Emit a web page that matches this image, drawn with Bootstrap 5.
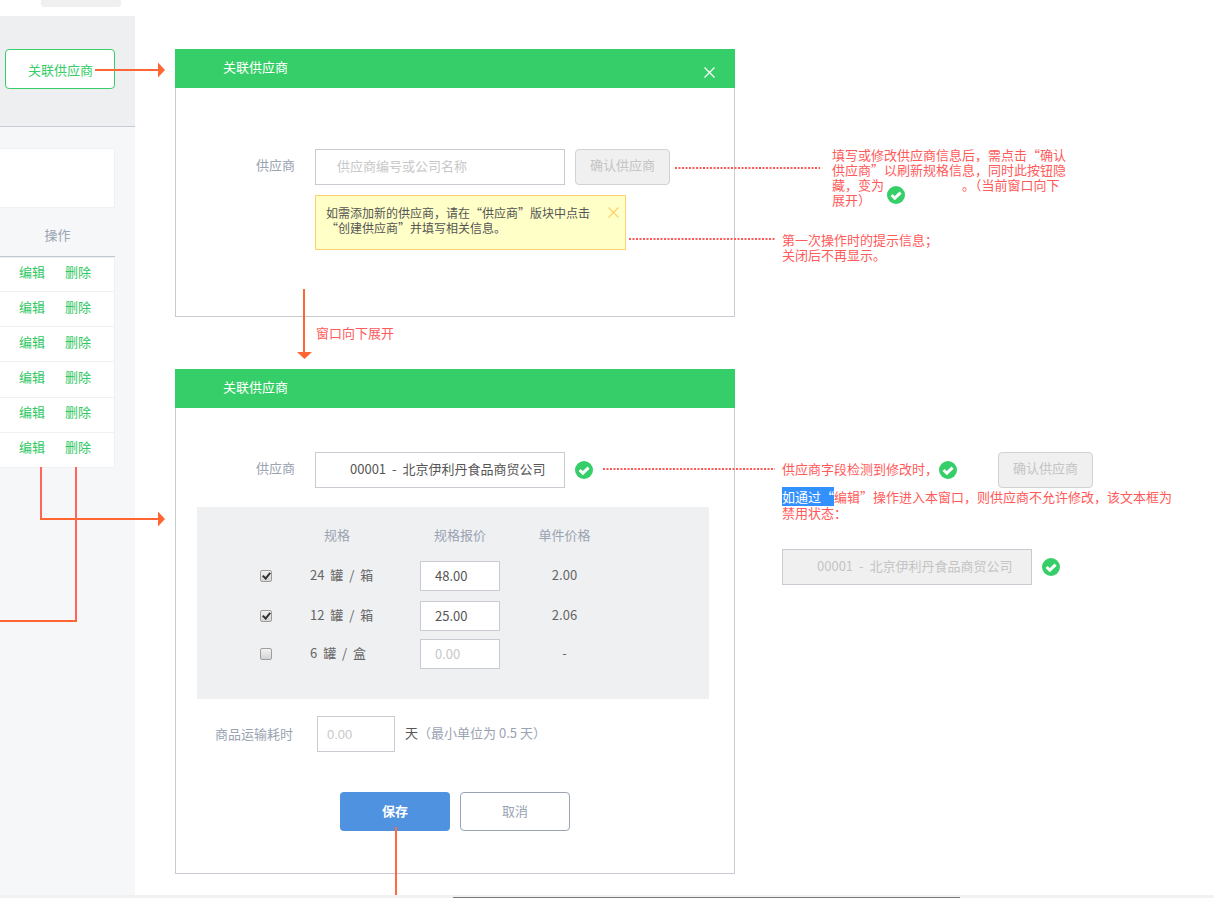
<!DOCTYPE html>
<html lang="zh-CN">
<head>
    <meta charset="utf-8">
    <title>关联供应商</title>
    <link href="https://cdn.jsdelivr.net/npm/bootstrap@5.3.0/dist/css/bootstrap.min.css" rel="stylesheet">
    <style>
        html, body { height: 100%; }
        body { margin: 0; background: #fff; overflow: hidden; color: #555; font: 13px/15px "Noto Sans CJK SC", "Liberation Sans", sans-serif; }
        .canvas { position: relative; width: 1214px; height: 898px; overflow: hidden; }

        /* left page fragment */
        .side { position: absolute; left: 0; top: 0; width: 135px; height: 895px; background: #f6f7f9; }
        .side-top { height: 16px; background: #fff; }
        .side-stub { width: 80px; height: 7px; margin-left: 41px; background: #f0f0f0; border-radius: 0 0 3px 3px; }
        .side-band { height: 111px; padding: 33px 0 0 5px; background: #eeeff1; border-bottom: 1px solid #c5cad3; }
        .link-btn { display: block; width: 110px; height: 40px; padding: 0 0 0 22px; font-size: 13px; line-height: 35px; text-align: left; color: #36ce68; background: #fff; border: 1px solid #36ce68; border-radius: 4px; }
        .side-box { width: 115px; height: 60px; margin-top: 21px; background: #fff; border: 1px solid #eef0f3; border-left: 0; }
        .side-head { width: 115px; height: 48px; line-height: 54px; text-align: center; color: #9aa3b2; }
        .op-list { width: 115px; border-radius: 0; border-top: 1px solid #c1c7d1; }
        .op-row { height: 35.17px; padding: 0 23px 6px 0; gap: 20px; color: #2fc862; background: #fff; border-color: #eef0f3; border-left: 0; border-radius: 0 !important; }

        /* dialog windows */
        .win { position: absolute; left: 175px; width: 560px; border-radius: 0; border: 1px solid #c8cbd2; }
        .win-a { top: 49px; height: 268px; }
        .win-b { top: 369px; height: 505px; }
        .win-head { height: 39px; margin: -1px -1px 0; padding: 0 0 4px 48px; color: #fff; font-size: 13px; background: #36ce68; border: 0; border-radius: 0 !important; }
        .win-close { width: 11px; height: 11px; margin: 11px 20px 0 0; }
        .win-body { padding: 0; }
        .win-a .win-body { padding-top: 61px; }
        .win-b .win-body { padding-top: 44px; }
        .field-label { width: 119px; margin-right: 20px; padding-bottom: 6px; text-align: right; color: #9aa3b2; }
        .text-box { width: 250px; height: 36px; padding: 0 0 4px 21px; font-size: 13px; color: #555; background: #fff; border: 1px solid #c8cbd2; border-radius: 0; }
        .text-box::placeholder { color: #c8c8c8; opacity: 1; }
        .text-box.filled { padding-left: 34px; word-spacing: 3px; }
        .text-box:disabled { background: #f0f0f0; color: #c4c4c4; opacity: 1; }
        .confirm-btn { width: 95px; height: 36px; padding: 0 0 4px; font-size: 13px; color: #c4c4c4; background: #f0f0f0; border: 1px solid #d2d2d2; border-radius: 4px; }
        .tip-box { position: relative; width: 311px; height: 55px; margin: 10px 0 0 139px; padding: 9px 10px 0 10px; font-size: 12px; line-height: 15px; color: #555; background: #ffffc8; border: 1px solid #fbd26b; border-radius: 0; }
        .tip-close { position: absolute; right: 6px; top: 11px; width: 11px; height: 11px; }
        .ok-icon { flex: none; width: 18px; height: 18px; display: block; }
        .ms-10 { margin-left: 10px; }

        .spec-panel { width: 512px; height: 192px; margin: 19px 0 0 21px; padding: 18px 0 0 63px; background: #eff0f2; }
        .spec-row { display: flex; align-items: center; height: 30px; }
        .spec-row.row-wide { margin-bottom: 10px; }
        .spec-row.row-tight { margin-bottom: 8px; }
        .spec-cols { height: 20px; margin-bottom: 16px; padding-bottom: 2px; color: #9aa3b2; }
        .cell-check { width: 50px; flex: none; line-height: 0; }
        .cell-name { width: 110px; flex: none; padding-bottom: 4px; font-size: 13px; word-spacing: 3px; color: #666; }
        .spec-cols .cell-name { padding: 0 0 0 14px; color: #9aa3b2; }
        .cell-input { width: 80px; flex: none; text-align: center; }
        .cell-price { width: 129px; flex: none; padding-bottom: 4px; text-align: center; font-size: 13px; color: #666; }
        .spec-cols .cell-price { padding-bottom: 0; color: #9aa3b2; }
        .price-box { width: 80px; height: 30px; padding: 0 0 2px 14px; font-size: 13px; color: #555; background: #fff; border: 1px solid #c8cbd2; border-radius: 0; }
        .price-box::placeholder { color: #c8c8c8; opacity: 1; }
        .spec-check { appearance: none; position: relative; display: inline-block; width: 12px; height: 12px; margin: 0; vertical-align: top; background: linear-gradient(#f2f2f2, #d4d4d4); border: 1px solid #9d9d9d; border-radius: 2px; }
        .spec-check:checked::before { content: ""; position: absolute; left: 3px; top: 0; width: 5px; height: 8px; border: solid #333; border-width: 0 2px 2px 0; transform: rotate(40deg); }

        .ship-label { width: 117px; margin-right: 24px; padding-bottom: 2px; text-align: right; color: #9aa3b2; }
        .ship-row { margin-top: 17px; }
        .ship-box { width: 78px; height: 36px; padding: 0 0 0 9px; font: 13px "Liberation Sans", sans-serif; background: #fff; border: 1px solid #c8cbd2; border-radius: 0; }
        .ship-box::placeholder { color: #c8c8c8; opacity: 1; }
        .ship-unit { margin-left: 10px; padding-bottom: 4px; font-size: 13px; color: #555; }
        .ship-hint { padding-bottom: 4px; font-size: 13px; color: #9aa3b2; }
        .act-row { margin: 40px 0 0 164px; gap: 10px; }
        .save-btn { width: 110px; height: 39px; padding: 0 0 2px; font-size: 13px; font-weight: 700; color: #fff; background: #4f92e0; border: 0; border-radius: 4px; }
        .cancel-btn { width: 110px; height: 39px; padding: 0 0 2px; font-size: 13px; color: #9aa3b2; background: #fff; border: 1px solid #9aa3b2; border-radius: 4px; }

        /* annotations */
        .note { position: absolute; font-size: 13px; line-height: 15px; color: #ff5a5a; }
        .note-a { left: 832px; top: 147px; width: 236px; }
        .note-b { left: 782px; top: 232px; }
        .note-c { left: 316px; top: 325px; }
        .note-d { left: 782px; top: 461px; }
        .note-e { left: 782px; top: 489px; width: 392px; line-height: 16px; }
        .note-e mark { padding: 0; color: #fff; background: #3390ff; }
        .gap-icon { display: inline-block; width: 78px; }
        .free { position: absolute; }
        .arrows { position: absolute; left: 0; top: 0; pointer-events: none; }
        .scroll-track { position: absolute; left: 0; bottom: 0; width: 1214px; height: 3px; background: #f1f1f1; }
        .scroll-thumb { width: 507px; height: 1px; margin: 2px 0 0 453px; background: #777; }
    </style>
</head>
<body>
<svg width="0" height="0" class="position-absolute">
    <symbol id="ok" viewBox="0 0 18 18">
        <circle cx="9" cy="9" r="9" fill="#36ce68"/>
        <path d="M4.6 9 7.8 12.2 13.6 6.6" fill="none" stroke="#fff" stroke-width="3"/>
    </symbol>
</svg>

<div class="canvas">
    <div class="side">
        <div class="side-top"><div class="side-stub"></div></div>
        <div class="side-band">
            <button class="btn link-btn" type="button">关联供应商</button>
        </div>
        <div class="side-box"></div>
        <div class="side-head">操作</div>
        <div class="list-group op-list">
            <div class="list-group-item op-row d-flex justify-content-end align-items-center"><span>编辑</span><span>删除</span></div>
            <div class="list-group-item op-row d-flex justify-content-end align-items-center"><span>编辑</span><span>删除</span></div>
            <div class="list-group-item op-row d-flex justify-content-end align-items-center"><span>编辑</span><span>删除</span></div>
            <div class="list-group-item op-row d-flex justify-content-end align-items-center"><span>编辑</span><span>删除</span></div>
            <div class="list-group-item op-row d-flex justify-content-end align-items-center"><span>编辑</span><span>删除</span></div>
            <div class="list-group-item op-row d-flex justify-content-end align-items-center"><span>编辑</span><span>删除</span></div>
        </div>
    </div>

    <div class="card win win-a">
        <div class="card-header win-head d-flex justify-content-between align-items-center">
            <span>关联供应商</span>
            <svg class="win-close" viewBox="0 0 11 11"><path d="M.5.5l10 10M10.5.5l-10 10" stroke="#fff" stroke-width="1.2"/></svg>
        </div>
        <div class="card-body win-body">
            <div class="d-flex align-items-center">
                <div class="field-label">供应商</div>
                <input class="text-box" type="text" placeholder="供应商编号或公司名称">
                <button class="btn confirm-btn ms-10" type="button">确认供应商</button>
            </div>
            <div class="alert tip-box mb-0">
                如需添加新的供应商，请在“供应商”版块中点击<br>“创建供应商”并填写相关信息。
                <svg class="tip-close" viewBox="0 0 11 11"><path d="M.5.5l10 10M10.5.5l-10 10" stroke="#fbd26b" stroke-width="1.2"/></svg>
            </div>
        </div>
    </div>

    <div class="card win win-b">
        <div class="card-header win-head d-flex align-items-center"><span>关联供应商</span></div>
        <div class="card-body win-body">
            <div class="d-flex align-items-center">
                <div class="field-label">供应商</div>
                <input class="text-box filled" type="text" value="00001 - 北京伊利丹食品商贸公司">
                <svg class="ok-icon ms-10"><use href="#ok"/></svg>
            </div>
            <div class="spec-panel">
                <div class="spec-row spec-cols">
                    <div class="cell-check"></div>
                    <div class="cell-name">规格</div>
                    <div class="cell-input">规格报价</div>
                    <div class="cell-price">单件价格</div>
                </div>
                <div class="spec-row row-wide">
                    <div class="cell-check"><input class="spec-check" type="checkbox" checked></div>
                    <div class="cell-name">24 罐 / 箱</div>
                    <div class="cell-input"><input class="price-box" type="text" value="48.00"></div>
                    <div class="cell-price">2.00</div>
                </div>
                <div class="spec-row row-tight">
                    <div class="cell-check"><input class="spec-check" type="checkbox" checked></div>
                    <div class="cell-name">12 罐 / 箱</div>
                    <div class="cell-input"><input class="price-box" type="text" value="25.00"></div>
                    <div class="cell-price">2.06</div>
                </div>
                <div class="spec-row">
                    <div class="cell-check"><input class="spec-check" type="checkbox"></div>
                    <div class="cell-name">6 罐 / 盒</div>
                    <div class="cell-input"><input class="price-box" type="text" placeholder="0.00"></div>
                    <div class="cell-price">-</div>
                </div>
            </div>
            <div class="d-flex align-items-center ship-row">
                <div class="ship-label">商品运输耗时</div>
                <input class="ship-box" type="text" placeholder="0.00">
                <span class="ship-unit">天</span>
                <span class="ship-hint">（最小单位为 0.5 天）</span>
            </div>
            <div class="d-flex act-row">
                <button class="btn save-btn" type="button">保存</button>
                <button class="btn cancel-btn" type="button">取消</button>
            </div>
        </div>
    </div>

    <div class="note note-a">填写或修改供应商信息后，需点击“确认供应商”以刷新规格信息，同时此按钮隐藏，变为<span class="gap-icon"></span>。（当前窗口向下展开）</div>
    <svg class="ok-icon free" style="left:887px;top:186px"><use href="#ok"/></svg>
    <div class="note note-b">第一次操作时的提示信息；<br>关闭后不再显示。</div>
    <div class="note note-c">窗口向下展开</div>
    <div class="note note-d">供应商字段检测到修改时，</div>
    <svg class="ok-icon free" style="left:939px;top:461px"><use href="#ok"/></svg>
    <button class="btn confirm-btn free" style="left:998px;top:452px" type="button">确认供应商</button>
    <div class="note note-e"><mark>如通过“</mark>编辑”操作进入本窗口，则供应商不允许修改，该文本框为禁用状态：</div>
    <input class="text-box filled free" style="left:782px;top:549px" type="text" value="00001 - 北京伊利丹食品商贸公司" disabled>
    <svg class="ok-icon free" style="left:1042px;top:558px"><use href="#ok"/></svg>

    <svg class="arrows" width="1214" height="898" viewBox="0 0 1214 898">
        <g fill="none" stroke-width="2">
            <path d="M95 70H160" stroke="#ff6633"/>
            <path d="M304 289V353" stroke="#ff6633"/>
            <path d="M41 467V519" stroke="#ff6659"/>
            <path d="M40 519H160" stroke="#ff6633"/>
            <path d="M76 467V622" stroke="#ff6659"/>
            <path d="M77 621H0" stroke="#ff6633"/>
            <path d="M396 827V895" stroke="#ff6a45"/>
        </g>
        <g fill="#ff6633">
            <path d="M158 62.5 165 70 158 77.5Z"/>
            <path d="M158 511.5 165 519 158 526.5Z"/>
            <path d="M297 352 312 352 304.5 359Z"/>
        </g>
        <g stroke="#ff5a5a" stroke-width="2" stroke-dasharray="2 1.5">
            <path d="M675 168H820"/>
            <path d="M629 239H775"/>
            <path d="M603 469H775"/>
        </g>
    </svg>

    <div class="scroll-track"><div class="scroll-thumb"></div></div>
</div>

<script src="https://cdn.jsdelivr.net/npm/bootstrap@5.3.0/dist/js/bootstrap.bundle.min.js"></script>
</body>
</html>
